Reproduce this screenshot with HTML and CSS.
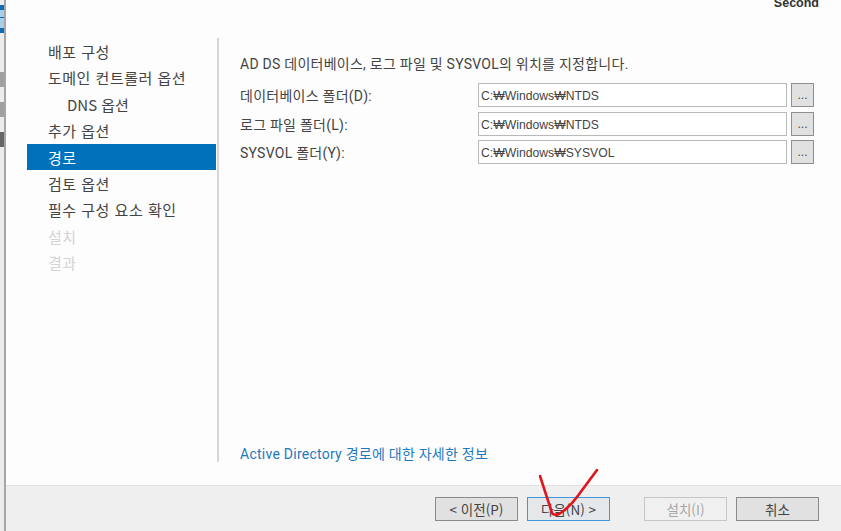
FILE: index.html
```html
<!doctype html>
<html lang="ko">
  <head>
    <meta charset="utf-8">
    <title>경로</title>
    <link rel="stylesheet" href="styles.css">
  </head>
  <body>
    <div class="edge">
      <div class="edge-icon"></div>
      <div class="edge-mark first"></div>
      <div class="edge-mark"></div>
      <div class="edge-mark dark"></div>
    </div>
    <div class="wizard">
      <div class="head">
        <div class="title">경로</div>
        <div class="server">Second</div>
      </div>
      <div class="main">
        <ul class="steps">
          <li>배포 구성</li>
          <li>도메인 컨트롤러 옵션</li>
          <li class="sub">DNS 옵션</li>
          <li>추가 옵션</li>
          <li class="on">경로</li>
          <li>검토 옵션</li>
          <li>필수 구성 요소 확인</li>
          <li class="off">설치</li>
          <li class="off">결과</li>
        </ul>
        <div class="pane">
          <p class="intro">AD DS 데이터베이스, 로그 파일 및 SYSVOL의 위치를 지정합니다.</p>
          <div class="row">
            <label>데이터베이스 폴더(D):</label>
            <input class="path" type="text" value="C:₩Windows₩NTDS">
            <button class="dots">...</button>
          </div>
          <div class="row">
            <label>로그 파일 폴더(L):</label>
            <input class="path" type="text" value="C:₩Windows₩NTDS">
            <button class="dots">...</button>
          </div>
          <div class="row">
            <label>SYSVOL 폴더(Y):</label>
            <input class="path" type="text" value="C:₩Windows₩SYSVOL">
            <button class="dots">...</button>
          </div>
          <a class="more">Active Directory 경로에 대한 자세한 정보</a>
        </div>
      </div>
      <div class="foot">
        <button class="btn">&lt; 이전(P)</button>
        <button class="btn focus">다음(N) &gt;</button>
        <button class="btn dim">설치(I)</button>
        <button class="btn">취소</button>
      </div>
    </div>
    <svg class="check" width="70" height="65" viewBox="0 0 70 65">
      <path d="M1 7 L13 44 Q15 47 20 45 Q30 39 38 28 L58 1" fill="none" stroke="#e3141c" stroke-width="2.6" stroke-linecap="round" stroke-linejoin="round"/>
    </svg>
  </body>
</html>
```
FILE: styles.css
```css
html, body {
    height: 100%;
    margin: 0;
}
body {
    display: flex;
    position: relative;
    overflow: hidden;
    background: #fdfdfd;
    color: #444444;
    font-family: Roboto, "Noto Sans CJK KR", sans-serif;
    font-size: 14px;
}
.edge {
    width: 4px;
    flex: none;
    background: #ececec;
    border-right: 2px solid #a6a6a6;
    padding-top: 5px;
}
.edge-icon {
    height: 28px;
    background: linear-gradient(#0f6cb4 5px, #a9cfe8 5px, #a9cfe8 12px, #0f6cb4 12px, #0f6cb4 13px, #a9cfe8 13px, #a9cfe8 23px, #0f6cb4 23px);
}
.edge-mark {
    height: 15px;
    margin-top: 15px;
    background: #a0a0a0;
}
.edge-mark.first {
    margin-top: 39px;
}
.edge-mark.dark {
    background: #666666;
}
.wizard {
    flex: 1;
    display: flex;
    flex-direction: column;
    min-width: 0;
}
.head {
    height: 38px;
    position: relative;
    overflow: hidden;
}
.title {
    position: absolute;
    top: -30px;
    left: 27px;
    font-size: 28px;
    line-height: 36px;
    color: #3f8dc0;
}
.server {
    position: absolute;
    top: -5px;
    right: 22px;
    font-family: "Liberation Sans", sans-serif;
    font-weight: bold;
    font-size: 12.5px;
    line-height: 16px;
    color: #333333;
}
.main {
    flex: 1;
    display: flex;
    min-height: 0;
}
.steps {
    list-style: none;
    width: 189px;
    height: 424px;
    margin: 0 0 0 21px;
    padding: 0;
    font-family: "Noto Sans CJK KR", sans-serif;
    font-size: 15px;
    letter-spacing: 0.5px;
}
.steps li {
    height: 26.4px;
    line-height: 28.6px;
    padding-left: 21px;
    white-space: nowrap;
}
.steps li.sub {
    padding-left: 40px;
    letter-spacing: 0;
}
.steps li.on {
    background: #0072bc;
    color: #ffffff;
}
.steps li.off {
    color: #d4d4d4;
}
.pane {
    position: relative;
    flex: 1;
    height: 424px;
    box-sizing: border-box;
    margin-left: 1px;
    border-left: 2px solid #d6d6d6;
    padding: 16px 27px 0 21px;
    letter-spacing: 0.25px;
}
.intro {
    margin: 0 0 9px;
    line-height: 20px;
}
.row {
    display: flex;
    align-items: center;
    height: 24px;
    margin-bottom: 4.7px;
}
.row label {
    width: 238px;
    flex: none;
}
.path {
    flex: 1;
    min-width: 0;
    height: 24px;
    box-sizing: border-box;
    border: 1px solid #b9b9b9;
    background: #ffffff;
    padding: 2px 2px 0;
    font: 12.2px "Liberation Sans", sans-serif;
    color: #444444;
}
.dots {
    width: 23px;
    height: 24px;
    margin-left: 4px;
    flex: none;
    border: 1px solid #8e8e8e;
    background: #e1e1e1;
    padding: 0;
    font: 12px "Liberation Sans", sans-serif;
    color: #444444;
}
.more {
    position: absolute;
    left: 21px;
    top: 406px;
    color: #1f79bd;
    line-height: 20px;
}
.foot {
    height: 46px;
    flex: none;
    display: flex;
    justify-content: flex-end;
    align-items: flex-start;
    gap: 9px;
    padding: 11px 22px 0 0;
    box-sizing: border-box;
    background: #efefef;
    border-top: 1px solid #e2e2e2;
}
.btn {
    width: 83px;
    height: 24px;
    box-sizing: border-box;
    border: 1px solid #8a8a8a;
    background: #e1e1e1;
    padding: 0;
    font-family: "Noto Sans CJK KR", sans-serif;
    font-size: 13.5px;
    line-height: 20px;
    color: #444444;
}
.btn.focus {
    border-color: #3f96dc;
    background: #e5e8ea;
    margin-right: 25px;
}
.btn.dim {
    border-color: #c6c6c6;
    background: #f0f0f0;
    color: #a6a6a6;
}
.check {
    position: absolute;
    left: 539px;
    top: 469px;
}
```
